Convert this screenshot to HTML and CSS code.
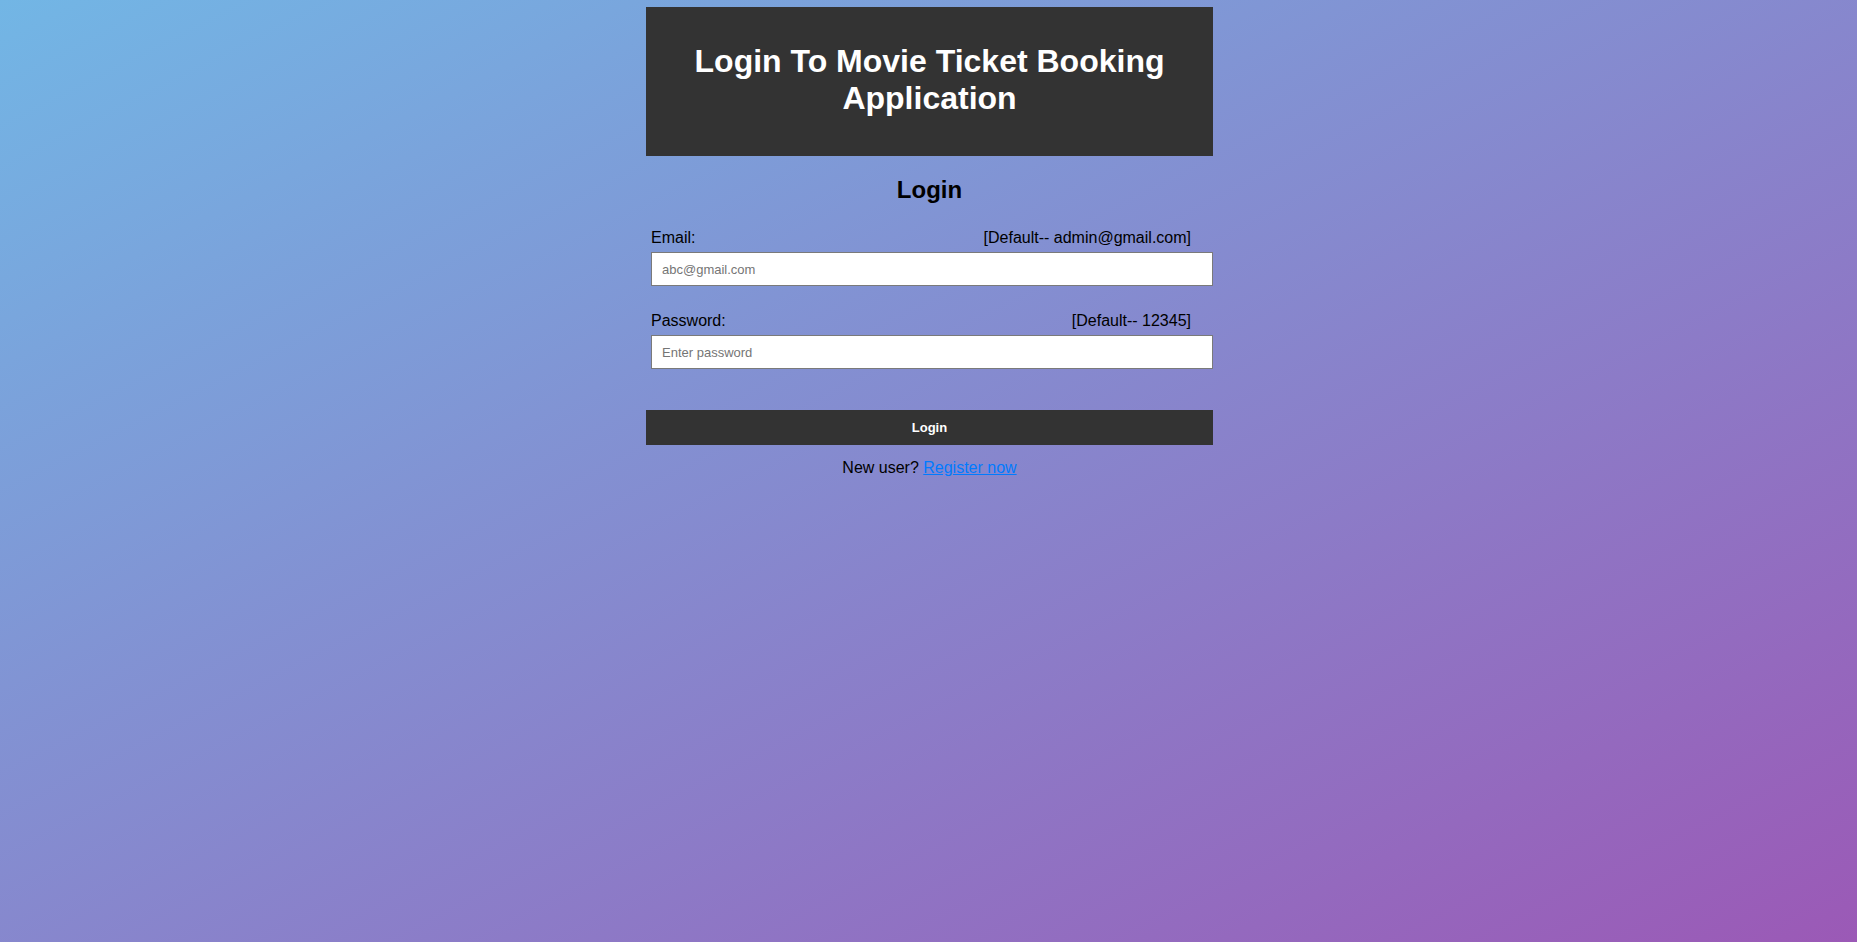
FILE: index.html
```html
<!DOCTYPE html>
<html lang="en">
<head>
<meta charset="utf-8">
<title>Login</title>
<link rel="stylesheet" href="styles.css">
</head>
<body>
<div class="container">
  <div class="header">
    <h1>Login To Movie Ticket Booking<br>Application</h1>
  </div>
  <h2 class="title">Login</h2>
  <form class="form">
    <div class="group">
      <div class="label-row"><label for="email">Email:</label><span>[Default-- admin@gmail.com]</span></div>
      <input id="email" class="input" type="email" placeholder="abc@gmail.com">
    </div>
    <div class="group">
      <div class="label-row"><label for="pw">Password:</label><span>[Default-- 12345]</span></div>
      <input id="pw" class="input" type="password" placeholder="Enter password">
    </div>
  </form>
  <button class="btn" type="button">Login</button>
  <p class="register">New user? <a href="#">Register now</a></p>
</div>
</body>
</html>
```

FILE: styles.css
```css
html, body {
  margin: 0;
  padding: 0;
}
body {
  min-height: 100vh;
  padding-left: 2px;
  box-sizing: border-box;
  background: linear-gradient(to bottom right, #72b6e5, #9b59b6);
  font-family: "Liberation Sans", Arial, sans-serif;
  color: #000;
}
.container {
  width: 567px;
  margin: 7px auto 0;
  padding-top: 0;
}
.header {
  background: #333333;
  padding: 36px 0 39px;
  text-align: center;
}
.header h1 {
  margin: 0;
  color: #ffffff;
  font-size: 32px;
  line-height: 37px;
  font-weight: bold;
}
.title {
  margin: 20px 0 0;
  font-size: 24px;
  line-height: 28px;
  text-align: center;
  font-weight: bold;
}
.form {
  padding-left: 5px;
}
.group {
  margin-top: 25px;
}
.group + .group {
  margin-top: 26px;
}
.label-row {
  display: flex;
  justify-content: space-between;
  padding-right: 22px;
  font-size: 16px;
  line-height: 18px;
  margin-bottom: 5px;
}
.input {
  display: block;
  box-sizing: border-box;
  width: 562px;
  height: 34px;
  margin: 0;
  padding: 0 10px;
  border: 1px solid #7a7a7a;
  background: #ffffff;
  font-family: "Liberation Sans", Arial, sans-serif;
  font-size: 13px;
  color: #000;
}
.input::placeholder {
  color: #757575;
}
.btn {
  display: block;
  width: 567px;
  height: 35px;
  margin-top: 41px;
  border: none;
  background: #333333;
  color: #ffffff;
  font-family: "Liberation Sans", Arial, sans-serif;
  font-size: 13px;
  font-weight: bold;
  padding: 0;
}
.register {
  margin: 14px 0 0;
  text-align: center;
  font-size: 16px;
  line-height: 18px;
}
.register a {
  color: #007bff;
  text-decoration: underline;
}
```
